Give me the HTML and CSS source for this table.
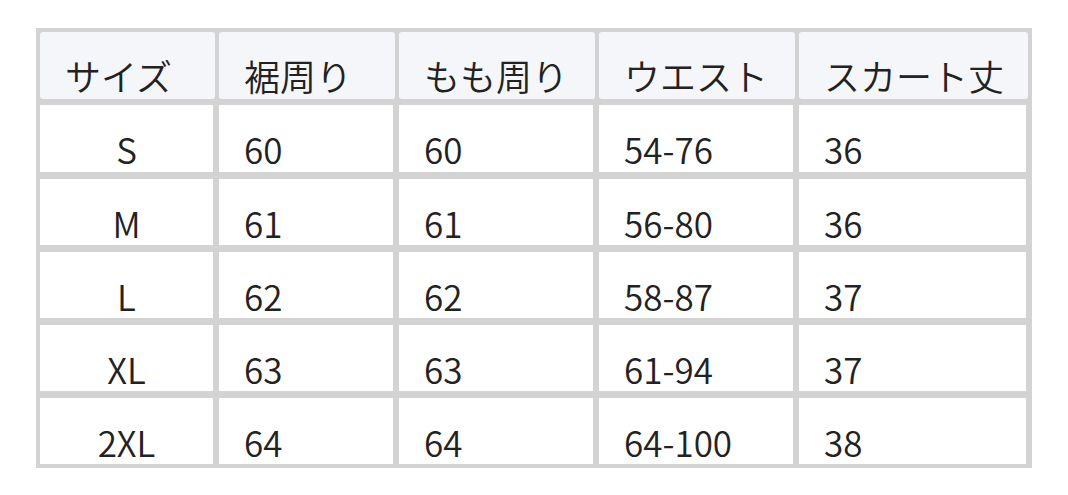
FILE: index.html
```html
<!DOCTYPE html>
<html lang="ja">
<head>
<meta charset="utf-8">
<title>サイズ表</title>
<link rel="stylesheet" href="styles.css">
</head>
<body>
<div class="size-table">
  <div class="row head">
    <div class="cell">サイズ</div>
    <div class="cell">裾周り</div>
    <div class="cell">もも周り</div>
    <div class="cell">ウエスト</div>
    <div class="cell">スカート丈</div>
  </div>
  <div class="row">
    <div class="cell size">S</div>
    <div class="cell">60</div>
    <div class="cell">60</div>
    <div class="cell">54-76</div>
    <div class="cell">36</div>
  </div>
  <div class="row">
    <div class="cell size">M</div>
    <div class="cell">61</div>
    <div class="cell">61</div>
    <div class="cell">56-80</div>
    <div class="cell">36</div>
  </div>
  <div class="row">
    <div class="cell size">L</div>
    <div class="cell">62</div>
    <div class="cell">62</div>
    <div class="cell">58-87</div>
    <div class="cell">37</div>
  </div>
  <div class="row">
    <div class="cell size">XL</div>
    <div class="cell">63</div>
    <div class="cell">63</div>
    <div class="cell">61-94</div>
    <div class="cell">37</div>
  </div>
  <div class="row">
    <div class="cell size">2XL</div>
    <div class="cell">64</div>
    <div class="cell">64</div>
    <div class="cell">64-100</div>
    <div class="cell">38</div>
  </div>
</div>
</body>
</html>
```

FILE: styles.css
```css
html, body {
  margin: 0;
  padding: 0;
  background: #ffffff;
}

body {
  font-family: "Noto Sans CJK JP", "Noto Sans", sans-serif;
  font-weight: 350;
  color: #222222;
}

.size-table {
  margin: 28px 0 0 36px;
  width: 996px;
  box-sizing: border-box;
  padding: 4px;
  background: #d3d3d3;
  display: flex;
  flex-direction: column;
  gap: 7px;
}

.row {
  display: grid;
  grid-template-columns: 175px 176px 196px 196px 229px;
  column-gap: 4px;
  height: 66px;
}

.row.head {
  height: 67px;
  margin-bottom: -1px;
}

.row:nth-child(2) {
  height: 67px;
}

.cell {
  box-sizing: border-box;
  padding: 23px 0 0 25px;
  font-size: 35px;
  line-height: 42px;
  white-space: nowrap;
  background: #ffffff;
  margin-right: 2px;
}

.head .cell {
  background: #f5f6fa;
  border-radius: 3px;
  margin-right: 0;
  font-size: 36px;
  padding: 22px 0 0 25px;
}

.cell.size {
  padding-left: 0;
  text-align: center;
}
```
